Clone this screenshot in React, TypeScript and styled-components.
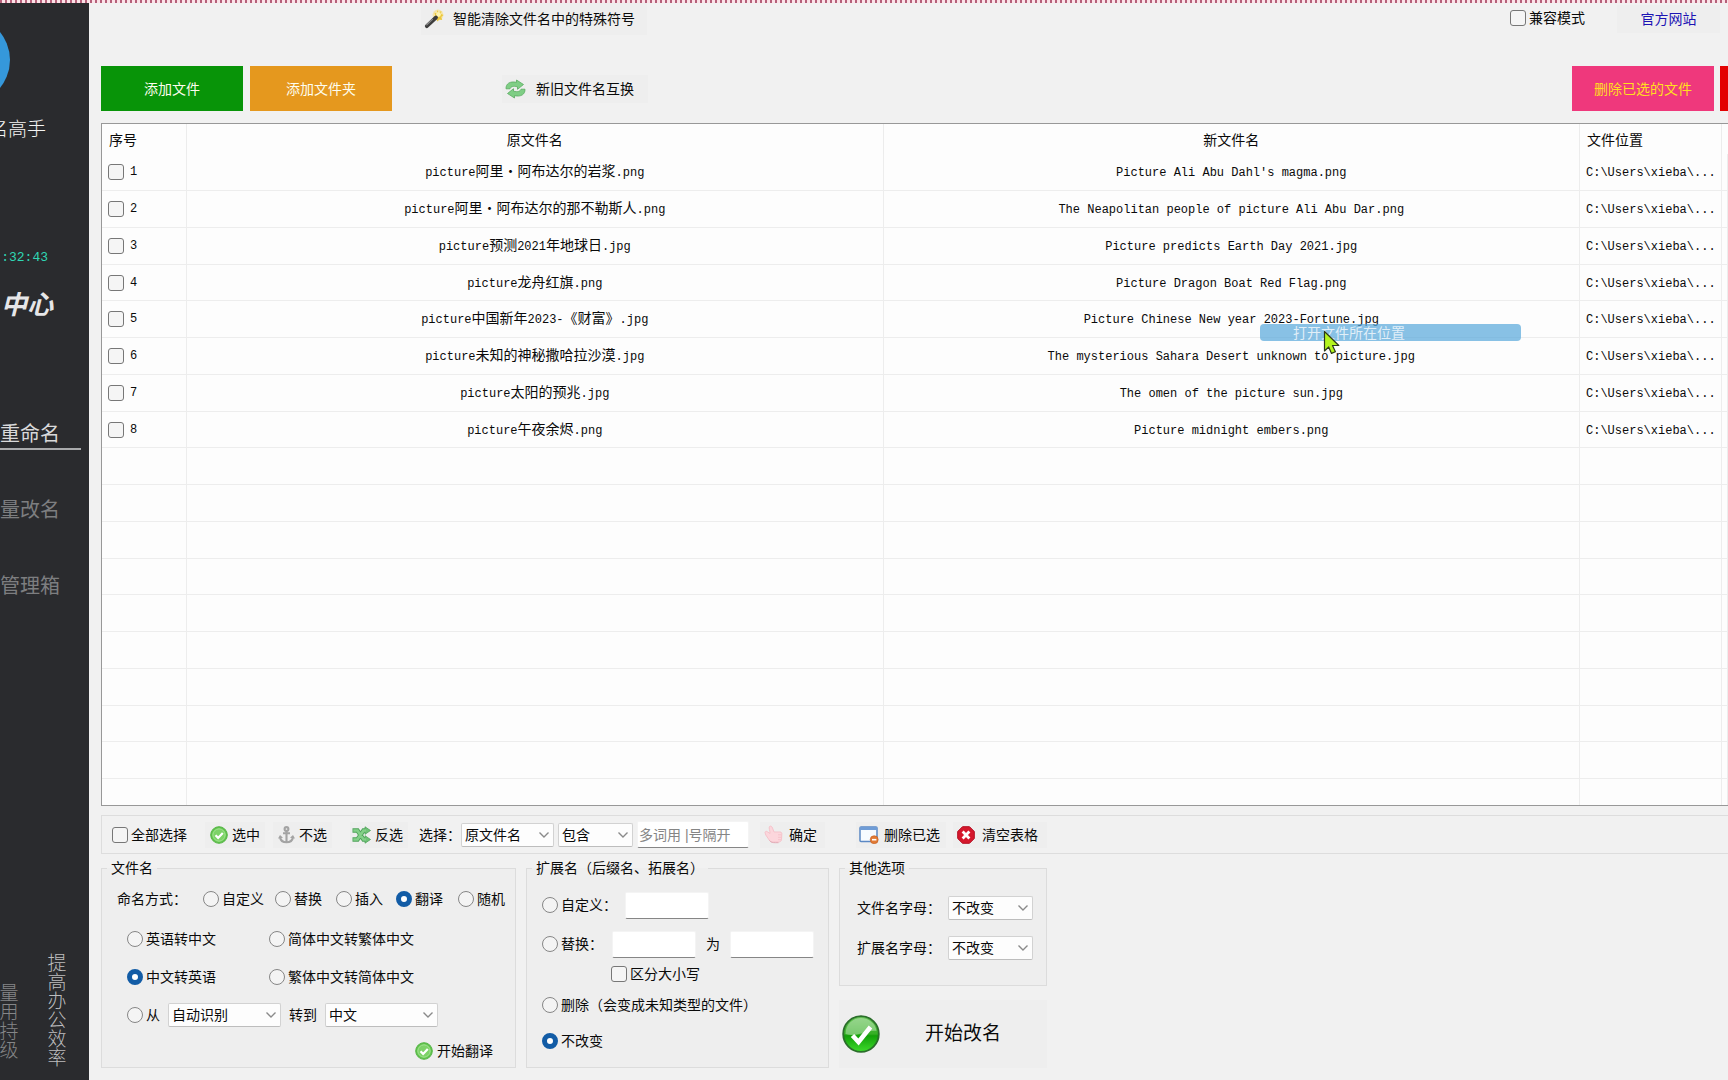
import React from "react";
import styled, { createGlobalStyle } from "styled-components";

const GlobalStyle = createGlobalStyle`
  *, *::before, *::after { box-sizing: border-box; }
  body { margin: 0; background: #f1f1f1; }
  body, button, input, select {
    font-family: "Liberation Sans", "Noto Sans CJK SC", sans-serif;
    font-size: 14px;
    line-height: 20px;
    color: #0a0a0a;
  }
`;

const Window = styled.div`
  display: flex;
  flex-direction: column;
  height: 100vh;
  min-height: 800px;
  overflow: hidden;
`;

const DottedEdge = styled.div`
  flex: none;
  height: 3px;
  background: repeating-linear-gradient(90deg, #b5607a 0 2px, #fbe3e8 2px 5px);
`;

const Body = styled.div`
  flex: 1;
  min-height: 0;
  display: flex;
`;

/* ---------- sidebar ---------- */

const Sidebar = styled.aside`
  flex: none;
  width: 89px;
  display: flex;
  flex-direction: column;
  align-items: flex-end;
  overflow: hidden;
  background: #2a2b2e;
  white-space: nowrap;
`;

const Avatar = styled.div`
  flex: none;
  width: 88px;
  height: 88px;
  margin: 13px 79px 0 0;
  border-radius: 50%;
  background: #3598db;
`;

const AppTitle = styled.h1`
  margin: 12px 43px 0 0;
  font-size: 19px;
  font-weight: 300;
  line-height: 28px;
  color: #f4f4f4;
`;

const Clock = styled.time`
  margin: 104px 41px 0 0;
  font-family: "Liberation Mono", monospace;
  font-size: 13px;
  line-height: 20px;
  color: #2fd6b4;
`;

const Brand = styled.div`
  margin: 18px 36px 0 0;
  display: flex;
  align-items: center;
  font-family: "Liberation Serif", "Noto Sans CJK SC", serif;
  font-size: 26px;
  font-style: italic;
  font-weight: 700;
  line-height: 40px;
  color: #e6e6e8;
`;

const Nav = styled.nav`
  margin-top: 94px;
  display: flex;
  flex-direction: column;
  gap: 46px;
`;

const NavLink = styled.a<{ $active?: boolean }>`
  display: flex;
  justify-content: flex-end;
  height: 30px;
  margin-right: 8px;
  padding-right: 21px;
  border-bottom: 2px solid ${(p) => (p.$active ? "#a9aaac" : "transparent")};
  font-size: 20px;
  line-height: 28px;
  color: ${(p) => (p.$active ? "#d9d9da" : "#7d7e80")};
  text-decoration: none;
`;

const Slogans = styled.div`
  margin: auto 22px 12px 0;
  display: flex;
  align-items: flex-end;
  gap: 28px;
`;

const Slogan = styled.p<{ $dim?: boolean }>`
  margin: 0 0 ${(p) => (p.$dim ? 8 : 0)}px;
  width: 20px;
  font-size: 19px;
  line-height: 19px;
  font-weight: 300;
  white-space: normal;
  text-align: center;
  color: ${(p) => (p.$dim ? "#858688" : "#bdbdbe")};
  word-break: break-all;
`;

/* ---------- main column ---------- */

const Main = styled.main`
  flex: 1;
  min-width: 0;
  display: flex;
  flex-direction: column;
  padding: 0 0 12px 12px;
`;

const TopBar = styled.header`
  flex: none;
  display: flex;
  align-items: flex-start;
  justify-content: space-between;
  height: 63px;
  padding: 0 8px 0 320px;
`;

const TopRight = styled.div`
  display: flex;
  align-items: center;
  gap: 32px;
`;

const ActionBar = styled.div`
  flex: none;
  display: flex;
  align-items: center;
  gap: 7px;
  height: 45px;
  margin-bottom: 12px;
  overflow: hidden;
`;

const FlatButton = styled.button<{ $h?: number; $gap?: number; $pad?: string }>`
  display: flex;
  flex: none;
  align-items: center;
  gap: ${(p) => p.$gap ?? 4}px;
  height: ${(p) => p.$h ?? 26}px;
  padding: ${(p) => p.$pad ?? "0 5px"};
  border: 0;
  background: #eeeeee;
  white-space: nowrap;
`;

const SiteLink = styled.a`
  display: block;
  width: 103px;
  margin-top: 2px;
  line-height: 28px;
  background: #eeeeee;
  color: #1c14b4;
  text-align: center;
  text-decoration: none;
`;

const SolidButton = styled.button<{ $bg: string; $fg?: string }>`
  flex: none;
  width: 142px;
  height: 45px;
  padding: 0;
  border: 0;
  background: ${(p) => p.$bg};
  color: ${(p) => p.$fg ?? "#fdfdee"};
`;

const SwapSlot = styled.div`
  flex: 1;
  padding-left: 103px;
`;

const RightButtons = styled.div`
  flex: none;
  width: 156px;
  display: flex;
  gap: 6px;
  overflow: hidden;
`;

/* ---------- table ---------- */

const TableFrame = styled.div`
  position: relative;
  flex: 1;
  min-height: 0;
  overflow: hidden;
  border: solid #989898;
  border-width: 1px 0 1px 1px;
  background: #fdfdfd;
`;

const FileTable = styled.table`
  width: 100%;
  table-layout: fixed;
  border-collapse: separate;
  border-spacing: 0;
`;

const Th = styled.th<{ $left?: boolean }>`
  height: 30px;
  padding: 2px 7px 0;
  border-right: 1px solid #ececec;
  font-weight: 400;
  text-align: ${(p) => (p.$left ? "left" : "center")};
  white-space: nowrap;
`;

const Tr = styled.tr`
  height: 37px;
  &:nth-child(4n) { height: 36px; }
`;

const Td = styled.td<{ $left?: boolean }>`
  padding: 0 6px;
  border: solid #ededed;
  border-width: 0 1px 1px 0;
  overflow: hidden;
  text-align: ${(p) => (p.$left ? "left" : "center")};
  white-space: pre;
`;

const Latin = styled.span`
  font-family: "Liberation Mono", monospace;
  font-size: 12px;
  line-height: 20px;
`;

const Menu = styled.div`
  position: absolute;
  top: 200px;
  left: 1158px;
  width: 261px;
  border-radius: 4px;
  background: rgba(86, 167, 218, 0.7);
`;

const MenuItem = styled.button`
  display: block;
  width: 100%;
  height: 17px;
  padding: 0 0 0 33px;
  border: 0;
  background: none;
  color: rgba(255, 255, 255, 0.75);
  line-height: 16px;
  text-align: left;
`;

const Pointer = styled.svg`
  position: absolute;
  top: 206px;
  left: 1221px;
`;

/* ---------- form parts ---------- */

const Check = styled.input.attrs({ type: "checkbox" })`
  appearance: none;
  flex: none;
  width: 16px;
  height: 16px;
  margin: 0;
  border: 1px solid #777;
  border-radius: 3px;
  background: #f5f5f5;
`;

const Radio = styled.input.attrs({ type: "radio" })`
  appearance: none;
  flex: none;
  width: 16px;
  height: 16px;
  margin: 0;
  border: 1px solid #868686;
  border-radius: 50%;
  background: #f4f4f4;
  &:checked {
    border: 5px solid #125ca6;
    background: #fff;
  }
`;

const Option = styled.label<{ $w?: number }>`
  display: flex;
  flex: none;
  align-items: center;
  gap: 3px;
  width: ${(p) => (p.$w ? p.$w + "px" : "auto")};
  white-space: nowrap;
`;

const RowLabel = styled(Option)`
  gap: 6px;
`;

const SelectBox = styled.span<{ $w: number }>`
  position: relative;
  flex: none;
  width: ${(p) => p.$w}px;
  height: 24px;
  svg {
    position: absolute;
    right: 4px;
    top: 8px;
    pointer-events: none;
  }
`;

const NativeSelect = styled.select`
  appearance: none;
  width: 100%;
  height: 24px;
  padding: 0 20px 0 3px;
  border: 1px solid #d2d2d2;
  border-bottom-color: #bdbdbd;
  border-radius: 2px;
  background: #fdfdfd;
`;

const TextInput = styled.input.attrs({ type: "text" })<{ $w: number }>`
  flex: none;
  width: ${(p) => p.$w}px;
  height: 27px;
  padding: 0 1px;
  border: 1px solid #f4f4f4;
  border-bottom-color: #868686;
  border-radius: 2px;
  background: #fff;
  &::placeholder { color: #858585; opacity: 1; }
`;

const Toolbar = styled.div`
  flex: none;
  display: flex;
  align-items: center;
  height: 39px;
  margin-top: 9px;
  padding-left: 10px;
  border: solid #dddddd;
  border-width: 1px 0 1px 1px;
`;

const Group = styled.div<{ $ml?: number; $gap?: number }>`
  display: flex;
  align-items: center;
  gap: ${(p) => p.$gap ?? 8}px;
  margin-left: ${(p) => p.$ml ?? 0}px;
`;

const Panels = styled.div`
  flex: none;
  display: flex;
  align-items: stretch;
  gap: 10px;
  margin-top: 4px;
`;

const Panel = styled.fieldset<{ $w: number; $h?: number; $pad: string }>`
  display: block;
  flex: none;
  width: ${(p) => p.$w}px;
  height: ${(p) => (p.$h ? p.$h + "px" : "auto")};
  min-width: 0;
  margin: 0;
  padding: ${(p) => p.$pad};
  border: 1px solid #dcdcdc;
  background: #eeeeee;
`;

const Legend = styled.legend`
  margin-left: 5px;
  padding: 0 4px;
`;

const Row = styled.div<{ $h: number; $pl?: number; $gap?: number; $end?: number }>`
  display: flex;
  align-items: center;
  gap: ${(p) => p.$gap ?? 0}px;
  height: ${(p) => p.$h}px;
  padding-left: ${(p) => p.$pl ?? 0}px;
  padding-right: ${(p) => p.$end ?? 0}px;
  justify-content: ${(p) => (p.$end ? "flex-end" : "flex-start")};
`;

const SideStack = styled.div`
  display: flex;
  flex-direction: column;
  justify-content: space-between;
`;

const StartButton = styled.button`
  display: flex;
  align-items: center;
  gap: 45px;
  width: 208px;
  height: 68px;
  padding: 0 0 0 3px;
  border: 0;
  background: #eeeeee;
  font-size: 19px;
  line-height: 28px;
`;

/* ---------- icons ---------- */

const WandIcon = () => (
  <svg width="20" height="20" viewBox="0 0 20 20" aria-hidden="true">
    <circle cx="14" cy="6" r="5.400" fill="#f6e08a" opacity=".7" />
    <path d="M13 1l1.600 2.600L17.400 2l-.5 3 2.600 1-2.300 1.900 1 3-3-.5-1.700 2-1.400-2.800-2.800-.6 2-2.200-.8-3 2.600.6z" fill="#ecc83c" />
    <circle cx="14.500" cy="5.500" r="2.400" fill="#fdf3b0" />
    <path d="M2.800 17.200L12 8.500" stroke="#3d3d3d" strokeWidth="3.800" strokeLinecap="round" />
    <path d="M2.800 15.800L8.500 10.400" stroke="#8b8b8b" strokeWidth="1.200" strokeLinecap="round" />
  </svg>
);

const SwapIcon = () => (
  <svg width="21" height="20" viewBox="0 0 21 20" aria-hidden="true" fill="#7fce85" stroke="#58ab60" strokeWidth=".8" strokeLinejoin="round">
    <path d="M1 9.800C.8 4.500 5 2 11.500 3.300V1L18.500 5.500 12.500 10.300V7.800C8 6.800 5.800 7.600 5 9.800z" />
    <path d="M20 10.200C20.200 15.500 16 18 9.500 16.700V19L2.500 14.500 8.500 9.700V12.200C13 13.200 15.200 12.400 16 10.200z" />
  </svg>
);

const OkIcon = ({ size = 18 }: { size?: number }) => (
  <svg width={size} height={size} viewBox="0 0 18 18" aria-hidden="true">
    <circle cx="9" cy="9" r="8.300" fill="#5fc24b" stroke="#55b545" />
    <circle cx="9" cy="9" r="6.200" fill="#7dd268" stroke="#a5e694" />
    <path d="M5.500 9.300l2.600 2.600 4.700-5" fill="none" stroke="#fff" strokeWidth="2.200" />
  </svg>
);

const AnchorIcon = () => (
  <svg width="17" height="18" viewBox="0 0 17 18" aria-hidden="true" fill="none" stroke="#a3a3a3" strokeWidth="2.100">
    <circle cx="8.500" cy="3" r="1.900" />
    <path d="M8.500 5v11M5 7.200h7" />
    <path d="M2 11c.5 3.300 3 5.300 6.500 5.300S14.500 14.300 15 11" />
    <path d="M0 12.500L2 9l3 2.800zM17 12.500L15 9l-3 2.800z" fill="#a3a3a3" stroke="none" />
  </svg>
);

const ShuffleIcon = () => (
  <svg width="19" height="18" viewBox="0 0 19 18" aria-hidden="true">
    <g fill="none" stroke="#4fa35a" strokeWidth="4.400">
      <path d="M.5 4.500h5l6 9H14M.5 13.500h5l6-9H14" />
    </g>
    <path d="M13 .8l5.500 3.700L13 8.300zM13 9.700l5.500 3.800-5.500 3.700z" fill="#6fc276" stroke="#4fa35a" strokeWidth=".8" />
    <g fill="none" stroke="#83d088" strokeWidth="2.600">
      <path d="M1.300 4.500h4.200l6 9H14M1.300 13.500h4.200l6-9H14" />
    </g>
  </svg>
);

const ThumbIcon = () => (
  <svg width="19" height="19" viewBox="0 0 19 19" aria-hidden="true">
    <path
      d="M1 7.500c0-1 1.500-1.600 2.500-.7L6 8.500C6.200 6 4.500 3 5.500 1.500c1.200-1 2.600 0 3 1.600L10 7h6c1.500 0 2 1 1.800 2.200l-.3 5.600c-.2 1.500-1.500 2.200-3 2.200H8.500c-1.500 0-2.500-.8-3.300-2L1.800 10z"
      fill="#fcd6dc"
      stroke="#f5c3cb"
    />
    <path d="M14 9.800h3.500M14 12.300h3.300M14 14.700h3" stroke="#f5c3cb" />
    <path d="M5.500 15.500c1.500 2 3.500 2.200 6 2.200h3" stroke="#e2a9b4" fill="none" />
  </svg>
);

const WindowMinusIcon = () => (
  <svg width="20" height="18" viewBox="0 0 20 18" aria-hidden="true">
    <rect x="1" y="1" width="17" height="14.500" rx="1" fill="#f7fbff" stroke="#5b88c4" strokeWidth="1.500" />
    <path d="M1 1h17v3H1z" fill="#6f9cd6" />
    <circle cx="15.200" cy="13.700" r="4" fill="#e27a35" stroke="#c25f22" strokeWidth=".6" />
    <path d="M13 13.700h4.400" stroke="#fff" strokeWidth="1.600" />
  </svg>
);

const ClearIcon = () => (
  <svg width="18" height="18" viewBox="0 0 18 18" aria-hidden="true">
    <path d="M5.500.7h7l4.800 4.800v7l-4.800 4.800h-7L.7 12.500v-7z" fill="#d5172c" stroke="#b30f22" />
    <path d="M5.600 5.600l6.800 6.800M12.400 5.600l-6.800 6.800" stroke="#fff" strokeWidth="2.800" />
  </svg>
);

const BigOkIcon = () => (
  <svg width="38" height="38" viewBox="0 0 38 38" aria-hidden="true">
    <defs>
      <linearGradient id="ok-fill" x1="0" y1="0" x2="0" y2="1">
        <stop offset="0" stopColor="#62c152" />
        <stop offset=".5" stopColor="#35ae25" />
        <stop offset=".55" stopColor="#12a008" />
        <stop offset="1" stopColor="#3edb2c" />
      </linearGradient>
    </defs>
    <circle cx="19" cy="19" r="17.800" fill="url(#ok-fill)" stroke="#2b6e2b" strokeWidth="1.800" />
    <path d="M3.500 19C3.500 9 11 3 19 3s15 6 15.500 13C26 14 14 23 3.500 19z" fill="#fff" opacity=".35" />
    <path d="M10.500 20.500l6 6.500L28.500 12" fill="none" stroke="#fff" strokeWidth="4.600" />
  </svg>
);

const Chevron = () => (
  <svg width="12" height="8" viewBox="0 0 12 8" aria-hidden="true">
    <path d="M1.500 1.500L6 6l4.500-4.500" fill="none" stroke="#8a8a8a" strokeWidth="1.400" />
  </svg>
);

/* ---------- helpers ---------- */

const Mixed = ({ text }: { text: string }) => (
  <>
    {text.split(/([\x20-\x7e]+)/).map((part, i) =>
      i % 2 ? <Latin key={i}>{part}</Latin> : part
    )}
  </>
);

const Select = ({ label, value, w }: { label: string; value: string; w: number }) => (
  <SelectBox $w={w}>
    <NativeSelect aria-label={label} defaultValue={value}>
      <option>{value}</option>
    </NativeSelect>
    <Chevron />
  </SelectBox>
);

const files = [
  ["picture阿里・阿布达尔的岩浆.png", "Picture Ali Abu Dahl's magma.png"],
  ["picture阿里・阿布达尔的那不勒斯人.png", "The Neapolitan people of picture Ali Abu Dar.png"],
  ["picture预测2021年地球日.jpg", "Picture predicts Earth Day 2021.jpg"],
  ["picture龙舟红旗.png", "Picture Dragon Boat Red Flag.png"],
  ["picture中国新年2023-《财富》.jpg", "Picture Chinese New year 2023-Fortune.jpg"],
  ["picture未知的神秘撒哈拉沙漠.jpg", "The mysterious Sahara Desert unknown to picture.jpg"],
  ["picture太阳的预兆.jpg", "The omen of the picture sun.jpg"],
  ["picture午夜余烬.png", "Picture midnight embers.png"],
];

const blankRows = Array.from({ length: 10 }, (_, i) => i);

const namingModes: [string, number][] = [
  ["自定义", 72],
  ["替换", 61],
  ["插入", 60],
  ["翻译", 62],
  ["随机", 0],
];

export default function App() {
  return (
    <Window>
      <GlobalStyle />
      <DottedEdge />
      <Body>
        <Sidebar>
          <Avatar />
          <AppTitle>名高手</AppTitle>
          <Clock>:32:43</Clock>
          <Brand>中心</Brand>
          <Nav>
            <NavLink href="#rename" $active>重命名</NavLink>
            <NavLink href="#batch">量改名</NavLink>
            <NavLink href="#manage">管理箱</NavLink>
          </Nav>
          <Slogans>
            <Slogan $dim>量用持级</Slogan>
            <Slogan>提高办公效率</Slogan>
          </Slogans>
        </Sidebar>

        <Main>
          <TopBar>
            <FlatButton $h={32} $gap={9} $pad="0 12px 0 3px">
              <WandIcon />
              智能清除文件名中的特殊符号
            </FlatButton>
            <TopRight>
              <Option>
                <Check />
                兼容模式
              </Option>
              <SiteLink href="#site">官方网站</SiteLink>
            </TopRight>
          </TopBar>

          <ActionBar>
            <SolidButton $bg="#089408">添加文件</SolidButton>
            <SolidButton $bg="#e5981e">添加文件夹</SolidButton>
            <SwapSlot>
              <FlatButton $h={28} $gap={10} $pad="0 14px 0 3px">
                <SwapIcon />
                新旧文件名互换
              </FlatButton>
            </SwapSlot>
            <RightButtons>
              <SolidButton $bg="#ef387c" $fg="#ffdf20">删除已选的文件</SolidButton>
              <SolidButton $bg="#e30202" aria-label="清空" />
            </RightButtons>
          </ActionBar>

          <TableFrame>
            <FileTable>
              <colgroup>
                <col style={{ width: 85 }} />
                <col />
                <col />
                <col style={{ width: 142 }} />
                <col style={{ width: 6 }} />
              </colgroup>
              <thead>
                <tr>
                  <Th $left>序号</Th>
                  <Th>原文件名</Th>
                  <Th>新文件名</Th>
                  <Th $left>文件位置</Th>
                  <td />
                </tr>
              </thead>
              <tbody>
                {files.map(([from, to], i) => (
                  <Tr key={from}>
                    <Td $left>
                      <RowLabel>
                        <Check />
                        <Latin>{i + 1}</Latin>
                      </RowLabel>
                    </Td>
                    <Td><Mixed text={from} /></Td>
                    <Td><Mixed text={to} /></Td>
                    <Td $left><Mixed text={"C:\\Users\\xieba\\..."} /></Td>
                    <Td />
                  </Tr>
                ))}
                {blankRows.map((n) => (
                  <Tr key={n}>
                    <Td /><Td /><Td /><Td /><Td />
                  </Tr>
                ))}
              </tbody>
            </FileTable>
            <Menu>
              <MenuItem>打开文件所在位置</MenuItem>
            </Menu>
            <Pointer width="18" height="26" viewBox="0 0 18 26" aria-hidden="true">
              <path d="M1.500 1.500v19.500l4.200-4 2.800 6.400 3.900-1.700-2.900-6.200h6.300z" fill="#b4f51e" stroke="#2b3a18" strokeWidth="1.200" strokeLinejoin="round" />
            </Pointer>
          </TableFrame>

          <Toolbar>
            <Option>
              <Check />
              全部选择
            </Option>
            <Group $ml={18}>
              <FlatButton><OkIcon />选中</FlatButton>
              <FlatButton><AnchorIcon />不选</FlatButton>
            </Group>
            <Group $ml={18} $gap={11}>
              <FlatButton $pad="0 5px 0 2px"><ShuffleIcon />反选</FlatButton>
              <span>选择：</span>
            </Group>
            <Group $gap={4}>
              <Select label="选择" value="原文件名" w={93} />
              <Select label="条件" value="包含" w={75} />
              <TextInput $w={112} placeholder="多词用 |号隔开" aria-label="关键词" />
            </Group>
            <Group $ml={11}>
              <FlatButton $gap={6} $pad="0 8px 0 4px"><ThumbIcon />确定</FlatButton>
            </Group>
            <Group $ml={31} $gap={7}>
              <FlatButton $gap={5} $pad="0 6px 0 3px"><WindowMinusIcon />删除已选</FlatButton>
              <FlatButton $gap={7} $pad="0 9px 0 4px"><ClearIcon />清空表格</FlatButton>
            </Group>
          </Toolbar>

          <Panels>
            <Panel $w={415} $h={210} $pad="0">
              <Legend>文件名</Legend>
              <Row $h={41} $pl={15}>
                <Option $w={86}>命名方式：</Option>
                {namingModes.map(([name, w]) => (
                  <Option key={name} $w={w}>
                    <Radio name="mode" defaultChecked={name === "翻译"} />
                    {name}
                  </Option>
                ))}
              </Row>
              <Row $h={40} $pl={25}>
                <Option $w={142}><Radio name="translate" />英语转中文</Option>
                <Option><Radio name="translate" />简体中文转繁体中文</Option>
              </Row>
              <Row $h={36} $pl={25}>
                <Option $w={142}><Radio name="translate" defaultChecked />中文转英语</Option>
                <Option><Radio name="translate" />繁体中文转简体中文</Option>
              </Row>
              <Row $h={40} $pl={25} $gap={8}>
                <Option><Radio name="translate" />从</Option>
                <Select label="源语言" value="自动识别" w={113} />
                <span>转到</span>
                <Select label="目标语言" value="中文" w={113} />
              </Row>
              <Row $h={32} $end={18}>
                <FlatButton $pad="0 4px"><OkIcon />开始翻译</FlatButton>
              </Row>
            </Panel>

            <Panel $w={303} $h={210} $pad="7px 0 0">
              <Legend>扩展名（后缀名、拓展名）</Legend>
              <Row $h={40} $pl={15}>
                <Option $w={83}><Radio name="ext" />自定义：</Option>
                <TextInput $w={84} aria-label="自定义扩展名" />
              </Row>
              <Row $h={38} $pl={15}>
                <Option $w={70}><Radio name="ext" />替换：</Option>
                <Group $gap={10}>
                  <TextInput $w={84} aria-label="原扩展名" />
                  <span>为</span>
                  <TextInput $w={84} aria-label="新扩展名" />
                </Group>
              </Row>
              <Row $h={22} $pl={84}>
                <Option><Check />区分大小写</Option>
              </Row>
              <Row $h={40} $pl={15}>
                <Option><Radio name="ext" />删除（会变成未知类型的文件）</Option>
              </Row>
              <Row $h={32} $pl={15}>
                <Option><Radio name="ext" defaultChecked />不改变</Option>
              </Row>
            </Panel>

            <SideStack>
              <Panel $w={208} $h={128} $pad="10px 0 0">
                <Legend>其他选项</Legend>
                <Row $h={40} $pl={17}>
                  <Option $w={91}>文件名字母：</Option>
                  <Select label="文件名字母" value="不改变" w={85} />
                </Row>
                <Row $h={40} $pl={17}>
                  <Option $w={91}>扩展名字母：</Option>
                  <Select label="扩展名字母" value="不改变" w={85} />
                </Row>
              </Panel>
              <StartButton>
                <BigOkIcon />
                开始改名
              </StartButton>
            </SideStack>
          </Panels>
        </Main>
      </Body>
    </Window>
  );
}
